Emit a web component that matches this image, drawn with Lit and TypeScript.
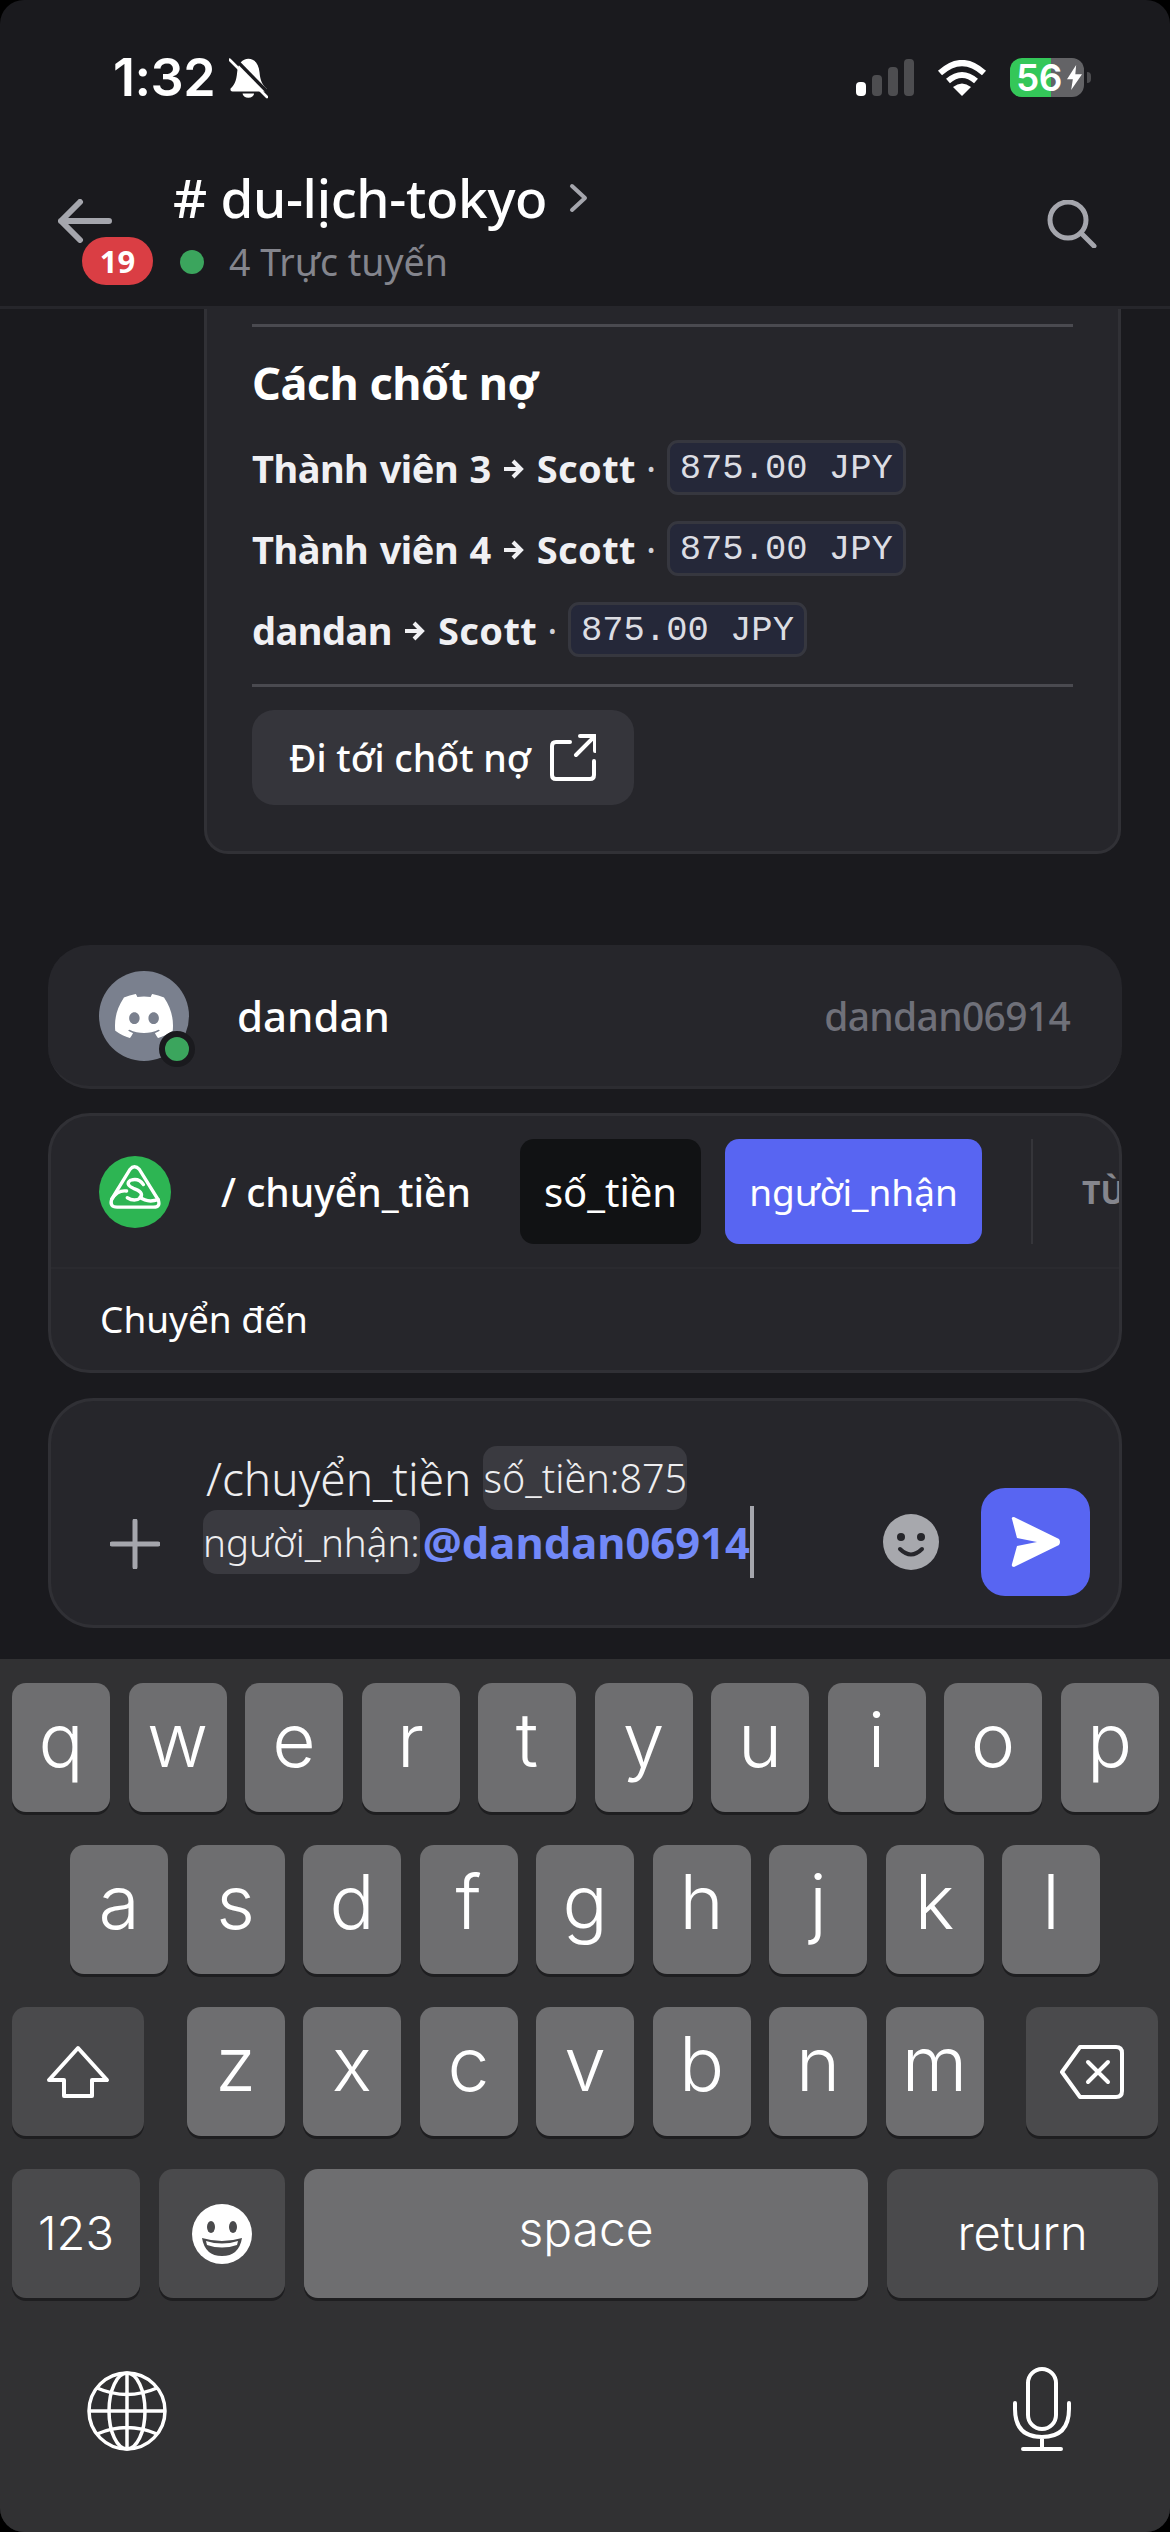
import { LitElement, html, css } from 'lit';
import { customElement } from 'lit/decorators.js';

const settleRows = ['Thành viên 3', 'Thành viên 4', 'dandan'];
const keyRow1 = 'qwertyuiop'.split('');
const keyRow2 = 'asdfghjkl'.split('');
const keyRow3 = 'zxcvbnm'.split('');

const clyde = 'M20.317 4.3698a19.7913 19.7913 0 00-4.8851-1.5152.0741.0741 0 00-.0785.0371c-.211.3753-.4447.8648-.6083 1.2495-1.8447-.2762-3.68-.2762-5.4868 0-.1636-.3933-.4058-.8742-.6177-1.2495a.077.077 0 00-.0785-.037 19.7363 19.7363 0 00-4.8852 1.515.0699.0699 0 00-.0321.0277C.5334 9.0458-.319 13.5799.0992 18.0578a.0824.0824 0 00.0312.0561c2.0528 1.5076 4.0413 2.4228 5.9929 3.0294a.0777.0777 0 00.0842-.0276c.4616-.6304.8731-1.2952 1.226-1.9942a.076.076 0 00-.0416-.1057c-.6528-.2476-1.2743-.5495-1.8722-.8923a.077.077 0 01-.0076-.1277c.1258-.0943.2517-.1923.3718-.2914a.0743.0743 0 01.0776-.0105c3.9278 1.7933 8.18 1.7933 12.0614 0a.0739.0739 0 01.0785.0095c.1202.099.246.1981.3728.2924a.077.077 0 01-.0066.1276 12.2986 12.2986 0 01-1.873.8914.0766.0766 0 00-.0407.1067c.3604.698.7719 1.3628 1.225 1.9932a.076.076 0 00.0842.0286c1.961-.6067 3.9495-1.5219 6.0023-3.0294a.077.077 0 00.0313-.0552c.5004-5.177-.8382-9.6739-3.5485-13.6604a.061.061 0 00-.0312-.0286zM8.02 15.3312c-1.1825 0-2.1569-1.0857-2.1569-2.419 0-1.3332.9555-2.4189 2.157-2.4189 1.2108 0 2.1757 1.0952 2.1568 2.419 0 1.3332-.9555 2.4189-2.1569 2.4189zm7.9748 0c-1.1825 0-2.1569-1.0857-2.1569-2.419 0-1.3332.9554-2.4189 2.1569-2.4189 1.2108 0 2.1757 1.0952 2.1568 2.419 0 1.3332-.946 2.4189-2.1568 2.4189Z';

@customElement('app-root')
export class AppRoot extends LitElement {
    static styles = css`
        :host {
            display: block;
            width: 1170px;
            height: 2532px;
            background: #000;
            font-family: "Noto Sans", sans-serif;
            color: #fff;
        }
        * { box-sizing: border-box; }
        .screen {
            width: 1170px;
            height: 2532px;
            border-radius: 24px;
            overflow: hidden;
            background: #1a1a1e;
            display: flex;
            flex-direction: column;
        }

        .status-bar {
            height: 110px;
            display: flex;
            align-items: flex-start;
            padding: 48px 86px 0 113px;
            flex: none;
        }
        .clock {
            font-family: Inter, sans-serif;
            font-weight: 600;
            font-size: 52px;
            line-height: 60px;
            letter-spacing: -0.5px;
        }
        .bell { margin: 9px 0 0 14px; }
        .status-right {
            margin-left: auto;
            display: flex;
            align-items: flex-start;
        }
        .signal {
            display: flex;
            align-items: flex-end;
            gap: 6px;
            height: 37px;
            margin-top: 11px;
        }
        .signal span {
            width: 10px;
            border-radius: 4px;
            background: #4d4d50;
        }
        .signal span:first-child { background: #fff; }
        .wifi { margin: 12px 0 0 23px; }
        .battery {
            width: 74px;
            height: 39px;
            margin: 10px 0 0 23px;
            border-radius: 12px;
            background: linear-gradient(90deg, #34c759 55%, #636366 55%);
            display: flex;
            align-items: center;
            padding-left: 6px;
            font-family: Inter, sans-serif;
            font-weight: 600;
            font-size: 37px;
            line-height: 39px;
            letter-spacing: -0.5px;
            position: relative;
        }
        .battery svg { margin-left: 4px; }
        .battery::after {
            content: '';
            position: absolute;
            right: -7px;
            top: 14px;
            width: 4px;
            height: 11px;
            border-radius: 0 4px 4px 0;
            background: #4d4d50;
        }

        .topbar {
            height: 199px;
            flex: none;
            display: flex;
            align-items: flex-start;
            padding: 0 73px 0 58px;
            border-bottom: 3px solid #26262b;
        }
        .back {
            width: 54px;
            position: relative;
            margin-top: 89px;
            flex: none;
        }
        .back svg { display: block; }
        .badge {
            position: absolute;
            left: 24px;
            top: 38px;
            width: 71px;
            height: 48px;
            border-radius: 24px;
            background: #da3e44;
            font-weight: 700;
            font-size: 31px;
            line-height: 48px;
            text-align: center;
        }
        .titles {
            margin: 54px 0 0 61px;
        }
        .channel {
            display: flex;
            align-items: center;
            font-size: 53px;
            line-height: 68px;
            font-weight: 500;
            letter-spacing: -0.3px;
        }
        .channel svg { margin-left: 22px; }
        .online {
            display: flex;
            align-items: center;
            margin-top: 5px;
            font-size: 37.5px;
            line-height: 50px;
            color: #84858d;
        }
        .online i {
            width: 24px;
            height: 24px;
            border-radius: 50%;
            background: #3ba55d;
            margin: 0 25px 0 7px;
        }
        .search { margin: 90px 0 0 auto; }

        .message {
            flex: none;
            margin-left: 204px;
            width: 917px;
            height: 545px;
            padding: 15px 45px 0 45px;
            background: #26262b;
            border: 3px solid #313136;
            border-top: 0;
            border-radius: 0 0 24px 24px;
        }
        .rule {
            height: 3px;
            background: #4a4a50;
        }
        .message h2 {
            margin: 21px 0 0;
            font-size: 45px;
            line-height: 70px;
            font-weight: 700;
            letter-spacing: -0.5px;
        }
        .settles {
            display: flex;
            flex-direction: column;
            gap: 26px;
            margin: 22px 0 27px;
        }
        .settle {
            display: flex;
            align-items: center;
            height: 55px;
            font-size: 38px;
            font-weight: 700;
            color: #f0f0f3;
            letter-spacing: -0.5px;
        }
        .settle svg { margin: 2px 13px 0 12px; }
        .name { word-spacing: 2px; }
        .payee { letter-spacing: 0.4px; }
        .sep {
            font-weight: 400;
            margin: 0 11px 0 10px;
            color: #d0d0d5;
        }
        .amount {
            height: 55px;
            padding: 0 10px;
            font-family: "Liberation Mono", monospace;
            font-weight: 400;
            font-size: 35.5px;
            line-height: 51px;
            letter-spacing: 0;
            color: #dcdde3;
            background: #252839;
            border: 3px solid #36373f;
            border-radius: 11px;
        }
        .go {
            display: inline-flex;
            align-items: center;
            margin-top: 23px;
            width: 382px;
            height: 95px;
            padding-left: 37px;
            border-radius: 22px;
            background: #35353b;
            font-size: 37.5px;
            font-weight: 500;
        }
        .go svg { margin-left: 19px; }

        .user-card {
            flex: none;
            display: flex;
            align-items: center;
            margin: 91px 48px 0;
            height: 144px;
            padding: 0 52px 0 51px;
            border-radius: 42px;
            background: #26262b;
            border-bottom: 3px solid #2c2c31;
        }
        .avatar {
            position: relative;
            width: 90px;
            height: 90px;
            border-radius: 50%;
            background: #7a808e;
            display: flex;
            align-items: center;
            justify-content: center;
            flex: none;
        }
        .dot {
            position: absolute;
            right: -6px;
            bottom: -6px;
            width: 24px;
            height: 24px;
            border-radius: 50%;
            background: #3ba55d;
            box-sizing: content-box;
            border: 6px solid #1a1a1e;
        }
        .user-name {
            margin-left: 48px;
            font-size: 42px;
            font-weight: 500;
        }
        .user-tag {
            margin-left: auto;
            font-size: 39px;
            font-weight: 500;
            color: #6f7079;
            letter-spacing: -0.7px;
        }

        .cmd-card {
            flex: none;
            margin: 24px 48px 0;
            height: 260px;
            border-radius: 42px;
            background: #26262b;
            border: 3px solid #303035;
            overflow: hidden;
        }
        .cmd-top {
            display: flex;
            align-items: center;
            height: 153px;
            padding: 24px 0 24px 48px;
            border-bottom: 2px solid #2a2a2f;
            white-space: nowrap;
        }
        .cmd-name {
            margin-left: 50px;
            width: 299px;
            font-size: 39px;
            font-weight: 500;
            flex: none;
        }
        .opt {
            display: flex;
            align-items: center;
            justify-content: center;
            height: 105px;
            border-radius: 14px;
            font-size: 37px;
            flex: none;
        }
        .opt.a { width: 181px; background: #111214; font-size: 40px; }
        .opt.b { width: 257px; margin-left: 24px; background: #5865f2; }
        .opt-line {
            width: 2px;
            height: 105px;
            background: #35353a;
            margin-left: 49px;
            flex: none;
        }
        .opt-more {
            margin-left: 49px;
            font-size: 32px;
            font-weight: 700;
            color: #85868d;
        }
        .cmd-desc {
            padding: 25px 0 0 49px;
            font-size: 37px;
            line-height: 50px;
        }

        .input-card {
            flex: none;
            display: flex;
            align-items: flex-end;
            margin: 25px 48px 0;
            height: 230px;
            padding: 0 29px 29px 59px;
            border-radius: 46px;
            background: #26262b;
            border: 3px solid #303035;
        }
        .plus { margin-bottom: 27px; flex: none; }
        .input-text {
            width: 632px;
            margin: 0 0 22px 43px;
            flex: none;
            font-size: 39.5px;
            font-weight: 300;
            line-height: 64px;
            color: #eeeef0;
            white-space: nowrap;
        }
        .input-text .line { display: flex; height: 64px; }
        .line.first { padding-left: 3px; }
        .slash { font-size: 46px; }
        .arg {
            height: 64px;
            background: #3a3a40;
            border-radius: 14px;
        }
        .line.first .arg { margin-left: 12px; }
        .arg.to { font-size: 38.5px; }
        .mention {
            margin: -4px 0 0 3px;
            font-weight: 700;
            color: #7289f8;
            border-right: 4px solid #a5a6ad;
            font-size: 43.5px;
            height: 72px;
            line-height: 72px;
        }
        .smile { margin: 0 42px 26px 48px; flex: none; }
        .send {
            width: 109px;
            height: 108px;
            border-radius: 24px;
            background: #5865f2;
            display: flex;
            align-items: center;
            justify-content: center;
            flex: none;
        }

        .keyboard {
            margin-top: 31px;
            flex: 1;
            background: #313133;
            padding: 24px 12px 0;
            font-family: Inter, sans-serif;
            font-weight: 300;
            display: flex;
            flex-direction: column;
            gap: 33px;
        }
        .row {
            display: flex;
            justify-content: space-between;
            height: 129px;
            flex: none;
        }
        .row.home { padding: 0 58px; }
        .group { display: flex; gap: 18.5px; }
        .key {
            width: 98px;
            height: 129px;
            border-radius: 14px;
            background: #6e6e70;
            box-shadow: 0 3px 0 #1e1e20;
            display: flex;
            align-items: center;
            justify-content: center;
            font-size: 75px;
            padding-bottom: 16px;
            flex: none;
        }
        .key.dark { background: #4a4a4c; padding-bottom: 0; }
        .key.shift { width: 132px; }
        .key.small { font-size: 47px; padding-bottom: 3px; }
        .key.num { width: 128px; }
        .key.emoji { width: 126px; }
        .key.space { width: 564px; padding-bottom: 10px; font-size: 48px; }
        .key.ret { width: 271px; }
        .row.bottom { gap: 19px; justify-content: flex-start; }
        .globe-row {
            display: flex;
            justify-content: space-between;
            align-items: flex-end;
            padding: 0 87px 0 75px;
            margin-top: 36px;
        }
    `;

    render() {
        return html`
            <div class="screen">
                <div class="status-bar">
                    <span class="clock">1:32</span>
                    <svg class="bell" width="39" height="42" viewBox="0 0 115 124">
                        <path fill="#fff" d="M57 5C75 5 88 20 90 45C92 70 100 85 110 92Q113 102 105 102L10 102Q2 102 5 92C15 85 22 70 24 45C26 20 40 5 57 5Z"/>
                        <path fill="#fff" d="M40 108a17 12 0 0 0 34 0Z"/>
                        <path stroke="#1a1a1e" stroke-width="10" d="M8 -4L122 112"/>
                        <path stroke="#fff" stroke-width="8" stroke-linecap="round" d="M2 8L112 118"/>
                    </svg>
                    <div class="status-right">
                        <div class="signal">
                            <span style="height:14px"></span>
                            <span style="height:21px"></span>
                            <span style="height:29px"></span>
                            <span style="height:37px"></span>
                        </div>
                        <svg class="wifi" width="50" height="36" viewBox="0 0 50 36" fill="none" stroke="#fff">
                            <path stroke-width="6" d="M3 13Q25 -7 47 13"/>
                            <path stroke-width="6" d="M11 21Q25 9 39 21"/>
                            <path fill="#fff" stroke="none" d="M25 36L16 27Q25 20 34 27Z"/>
                        </svg>
                        <div class="battery">
                            56
                            <svg width="17" height="25" viewBox="0 0 18 30">
                                <path fill="#fff" d="M11 0L0 17H7L5 30L18 11H10Z"/>
                            </svg>
                        </div>
                    </div>
                </div>

                <div class="topbar">
                    <div class="back">
                        <svg width="54" height="44" viewBox="0 0 54 44" fill="none" stroke="#a5a6ad" stroke-width="6" stroke-linecap="round" stroke-linejoin="round">
                            <path d="M22 3L3 22L22 41M3 22H51"/>
                        </svg>
                        <span class="badge">19</span>
                    </div>
                    <div class="titles">
                        <div class="channel">
                            # du-lịch-tokyo
                            <svg width="19" height="30" viewBox="0 0 19 30" fill="none" stroke="#a5a6ad" stroke-width="4" stroke-linecap="round" stroke-linejoin="round">
                                <path d="M3 3L16 15L3 27"/>
                            </svg>
                        </div>
                        <div class="online"><i></i>4 Trực tuyến</div>
                    </div>
                    <svg class="search" width="50" height="48" viewBox="0 0 50 48" fill="none" stroke="#a5a6ad" stroke-width="5" stroke-linecap="round">
                        <circle cx="21" cy="20" r="18"/>
                        <path d="M34 33L47 46"/>
                    </svg>
                </div>

                <div class="message">
                    <div class="rule"></div>
                    <h2>Cách chốt nợ</h2>
                    <div class="settles">
                        ${settleRows.map(name => html`
                            <div class="settle">
                                <span class="name">${name}</span>
                                <svg width="21" height="20" viewBox="0 0 21 20" fill="none" stroke="#f0f0f3" stroke-width="4">
                                    <path d="M10 2L18 10L10 18M1 10H17"/>
                                </svg>
                                <span class="payee">Scott</span><span class="sep">·</span><span class="amount">875.00 JPY</span>
                            </div>
                        `)}
                    </div>
                    <div class="rule"></div>
                    <div class="go">
                        Đi tới chốt nợ
                        <svg width="46" height="47" viewBox="0 0 46 47" fill="none" stroke="#fff" stroke-width="4" stroke-linecap="round" stroke-linejoin="round">
                            <path d="M20 8H6Q2 8 2 12V41Q2 45 6 45H40Q44 45 44 41V27"/>
                            <path d="M30 2H45V17M45 2L26 21"/>
                        </svg>
                    </div>
                </div>

                <div class="user-card">
                    <div class="avatar">
                        <svg width="58" height="58" viewBox="0 0 24 24"><path fill="#fff" d="${clyde}"/></svg>
                        <span class="dot"></span>
                    </div>
                    <span class="user-name">dandan</span>
                    <span class="user-tag">dandan06914</span>
                </div>

                <div class="cmd-card">
                    <div class="cmd-top">
                        <svg width="72" height="72" viewBox="28 28 214 214" style="flex:none">
                            <circle cx="135" cy="135" r="107" fill="#2db553"/>
                            <g fill="none" stroke="#fff" stroke-width="10" stroke-linecap="round">
                                <path d="M120 68Q133 52 148 68L204 158Q212 180 190 180L82 180Q58 180 66 156Z"/>
                                <path d="M66 156Q84 128 110 132"/>
                                <path d="M160 113Q146 92 122 100Q104 112 130 124Q162 134 152 152Q134 166 112 152"/>
                                <path d="M150 150Q170 168 204 158"/>
                            </g>
                        </svg>
                        <span class="cmd-name">/ chuyển_tiền</span>
                        <span class="opt a">số_tiền</span>
                        <span class="opt b">người_nhận</span>
                        <span class="opt-line"></span>
                        <span class="opt-more">TÙY CHỌN</span>
                    </div>
                    <div class="cmd-desc">Chuyển đến</div>
                </div>

                <div class="input-card">
                    <svg class="plus" width="50" height="50" viewBox="0 0 50 50" stroke="#a5a6ad" stroke-width="5" stroke-linecap="round">
                        <path d="M25 2V48M2 25H48"/>
                    </svg>
                    <div class="input-text">
                        <div class="line first"><span class="slash">/chuyển_tiền</span><span class="arg">số_tiền:875</span></div>
                        <div class="line"><span class="arg to">người_nhận:</span><span class="mention">@dandan06914</span></div>
                    </div>
                    <svg class="smile" width="56" height="56" viewBox="0 0 56 56">
                        <circle cx="28" cy="28" r="28" fill="#a7a8ad"/>
                        <circle cx="18" cy="23" r="4" fill="#26262b"/>
                        <circle cx="38" cy="23" r="4" fill="#26262b"/>
                        <path d="M17 35Q28 46 39 35" fill="none" stroke="#26262b" stroke-width="4" stroke-linecap="round"/>
                    </svg>
                    <div class="send">
                        <svg width="51" height="50" viewBox="0 0 51 50">
                            <path fill="#fff" d="M2 2Q1 0 4 0L49 22Q51 25 49 28L4 50Q1 50 2 47L7 29L27 25L7 21Z"/>
                        </svg>
                    </div>
                </div>

                <div class="keyboard">
                    <div class="row">
                        <div class="group">${keyRow1.map(k => html`<span class="key">${k}</span>`)}</div>
                    </div>
                    <div class="row home">
                        <div class="group">${keyRow2.map(k => html`<span class="key">${k}</span>`)}</div>
                    </div>
                    <div class="row">
                        <span class="key dark shift">
                            <svg width="64" height="54" viewBox="0 0 64 54" fill="none" stroke="#fff" stroke-width="4" stroke-linejoin="round">
                                <path d="M32 3L61 35H46V51H18V35H3Z"/>
                            </svg>
                        </span>
                        <div class="group">${keyRow3.map(k => html`<span class="key">${k}</span>`)}</div>
                        <span class="key dark shift">
                            <svg width="64" height="54" viewBox="0 0 64 54" fill="none" stroke="#fff" stroke-width="4" stroke-linejoin="round" stroke-linecap="round">
                                <path d="M20 2H56Q62 2 62 8V46Q62 52 56 52H20L2 27Z"/>
                                <path d="M28 17L48 37M48 17L28 37"/>
                            </svg>
                        </span>
                    </div>
                    <div class="row bottom">
                        <span class="key dark small num">123</span>
                        <span class="key dark emoji">
                            <svg width="60" height="60" viewBox="0 0 60 60">
                                <circle cx="30" cy="30" r="30" fill="#fff"/>
                                <ellipse cx="19" cy="23" rx="4" ry="6" fill="#4a4a4c"/>
                                <ellipse cx="41" cy="23" rx="4" ry="6" fill="#4a4a4c"/>
                                <path d="M10 34Q30 40 50 34Q47 52 30 52Q13 52 10 34Z" fill="#4a4a4c"/>
                                <path d="M14 37Q30 42 46 37L45 41Q30 46 15 41Z" fill="#fff"/>
                            </svg>
                        </span>
                        <span class="key space">space</span>
                        <span class="key dark small ret">return</span>
                    </div>
                    <div class="globe-row">
                        <svg width="80" height="80" viewBox="0 0 80 80" fill="none" stroke="#fff" stroke-width="3.5">
                            <circle cx="40" cy="40" r="38"/>
                            <ellipse cx="40" cy="40" rx="18" ry="38"/>
                            <path d="M40 2V78M2 40H78M10 17Q40 30 70 17M10 63Q40 50 70 63"/>
                        </svg>
                        <svg width="58" height="84" viewBox="0 0 58 84" fill="none" stroke="#fff" stroke-width="4" stroke-linecap="round">
                            <rect x="15" y="2" width="28" height="60" rx="14"/>
                            <path d="M2 36V42Q2 70 29 70Q56 70 56 42V36M29 70V82M10 82H48"/>
                        </svg>
                    </div>
                </div>
            </div>
        `;
    }
}
